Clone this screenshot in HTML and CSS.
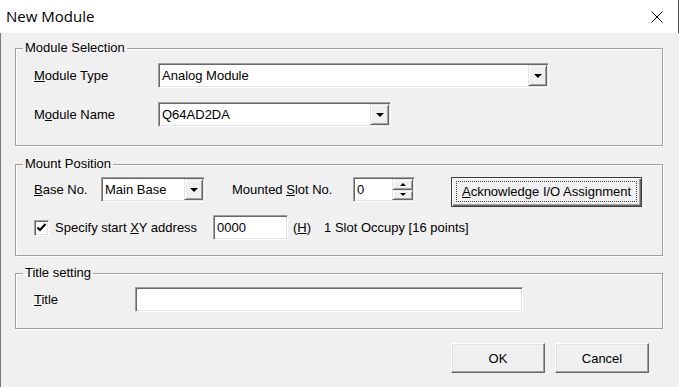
FILE: index.html
```html
<!DOCTYPE html>
<html lang="en">
<head>
  <meta charset="UTF-8">
  <title>New Module</title>
  <link rel="stylesheet" href="styles.css">
</head>
<body>
  <div class="dialog">
    <div class="titlebar">
      <span class="caption">New Module</span>
      <svg class="close" viewBox="0 0 12 12"><path d="M0.5 0.5L11.5 11.5M11.5 0.5L0.5 11.5"/></svg>
    </div>

    <div class="client">
      <fieldset class="group group-module">
        <legend>Module Selection</legend>
        <div class="row">
          <span class="lbl lbl-module"><u>M</u>odule Type</span>
          <div class="combo combo-type">
            <span class="combo-text">Analog Module</span>
            <span class="drop-btn"><i class="arrow"></i></span>
          </div>
        </div>
        <div class="row row-next">
          <span class="lbl lbl-module">M<u>o</u>dule Name</span>
          <div class="combo combo-name">
            <span class="combo-text">Q64AD2DA</span>
            <span class="drop-btn"><i class="arrow"></i></span>
          </div>
        </div>
      </fieldset>

      <fieldset class="group group-mount">
        <legend>Mount Position</legend>
        <div class="row row-top">
          <span class="lbl lbl-base"><u>B</u>ase No.</span>
          <div class="combo combo-base">
            <span class="combo-text">Main Base</span>
            <span class="drop-btn"><i class="arrow"></i></span>
          </div>
          <span class="lbl lbl-slot">Mounted <u>S</u>lot No.</span>
          <div class="spin">
            <span class="combo-text">0</span>
            <span class="spin-btns">
              <span class="spin-btn"><i class="tri tri-up"></i></span>
              <span class="spin-btn"><i class="tri tri-down"></i></span>
            </span>
          </div>
          <div class="btn btn-default"><span class="focus"><u>A</u>cknowledge I/O Assignment</span></div>
        </div>
        <div class="row row-check">
          <span class="check">
            <svg viewBox="0 0 11 11"><path d="M1.5 5.5L4 8L9.5 2"/></svg>
          </span>
          <span class="check-label">Specify start <u>X</u>Y address</span>
          <div class="edit edit-xy"><span class="combo-text">0000</span></div>
          <span class="hex">(<u>H</u>)</span>
          <span class="occupy">1 Slot Occupy [16 points]</span>
        </div>
      </fieldset>

      <fieldset class="group group-title">
        <legend>Title setting</legend>
        <div class="row">
          <span class="lbl lbl-title"><u>T</u>itle</span>
          <div class="edit edit-title"></div>
        </div>
      </fieldset>

      <div class="actions">
        <div class="btn btn-push">OK</div>
        <div class="btn btn-push">Cancel</div>
      </div>
    </div>
  </div>
</body>
</html>
```

FILE: styles.css
```css
html, body {
  margin: 0;
  padding: 0;
  width: 679px;
  height: 387px;
  overflow: hidden;
  background-color: #f0f0f0;
  font-family: 'Liberation Sans', Arial, sans-serif;
  font-size: 13px;
  color: #000;
}

.dialog {
  width: 679px;
  height: 387px;
  display: flex;
  flex-direction: column;
}

/* title bar */
.titlebar {
  height: 33px;
  flex: none;
  background-color: #fff;
  border-right: 1px solid #4a4a4a;
  display: flex;
  align-items: center;
  justify-content: space-between;
  padding: 0 15px 0 6px;
}

.caption {
  font-family: 'Open Sans', 'Noto Sans', sans-serif;
  font-size: 15px;
  color: #000;
  margin-top: -1px;
}

.close {
  width: 12px;
  height: 12px;
  stroke: #000;
  stroke-width: 1;
  fill: none;
}

.client {
  flex: 1;
  border-left: 1px solid #7a7a7a;
  padding: 8px 16px 0 14px;
}

/* group boxes */
.group {
  margin: 0;
  padding: 8px 0 18px 18px;
  border: 1px solid #a0a0a0;
  box-shadow: inset 1px 1px 0 #fff, 1px 1px 0 #fff;
  min-width: 0;
}

.group legend {
  padding: 0 2px;
  margin-left: -11px;
  line-height: 14px;
}

.group-mount {
  margin-top: 11px;
  padding-top: 6px;
  padding-bottom: 15px;
}

.group-title {
  margin-top: 10px;
  padding-top: 7px;
  padding-bottom: 16px;
}

.row {
  display: flex;
  align-items: center;
  height: 25px;
}

.row-next {
  margin-top: 14px;
}

.row-top {
  align-items: flex-start;
  height: 30px;
}

.row-check {
  margin-top: 8px;
}

.lbl {
  line-height: 25px;
  white-space: nowrap;
}

.lbl-module { width: 124px; }
.lbl-base { width: 67px; }
.lbl-slot { width: 121px; margin-left: 27px; }
.lbl-title { width: 101px; }

/* sunken fields */
.combo, .spin, .edit {
  box-sizing: border-box;
  height: 25px;
  display: flex;
  background-color: #fff;
  border-style: solid;
  border-width: 1px;
  border-color: #a0a0a0 #fff #fff #a0a0a0;
  box-shadow: inset 1px 1px 0 #696969, inset -1px -1px 0 #e3e3e3;
  padding: 1px;
}

.combo-type { width: 391px; }
.combo-name { width: 233px; }
.combo-base { width: 104px; }

.combo-text {
  flex: 1;
  padding-left: 2px;
  line-height: 21px;
  white-space: nowrap;
}

.drop-btn, .spin-btn {
  box-sizing: border-box;
  background-color: #f0f0f0;
  border-style: solid;
  border-width: 1px;
  border-color: #e3e3e3 #696969 #696969 #e3e3e3;
  box-shadow: inset 1px 1px 0 #fff, inset -1px -1px 0 #a0a0a0;
  display: flex;
  align-items: center;
  justify-content: center;
}

.drop-btn {
  width: 19px;
}

.arrow {
  width: 0;
  height: 0;
  border-top: 4px solid #000;
  border-left: 4px solid transparent;
  border-right: 4px solid transparent;
  margin-top: 1px;
}

.spin {
  width: 62px;
}

.spin-btns {
  width: 21px;
  display: flex;
  flex-direction: column;
}

.spin-btn {
  flex: 1;
}

.tri {
  width: 0;
  height: 0;
  border-left: 3px solid transparent;
  border-right: 3px solid transparent;
}

.tri-up { border-bottom: 3px solid #000; }
.tri-down { border-top: 3px solid #000; }

.edit-xy { width: 75px; }
.edit-title { width: 388px; }

/* buttons */
.btn {
  box-sizing: border-box;
  height: 30px;
  display: flex;
  align-items: center;
  justify-content: center;
  background-color: #f0f0f0;
  white-space: nowrap;
}

.btn-default {
  width: 191px;
  margin-left: 36px;
  border: 1px solid #3c3c3c;
  box-shadow: inset 1px 1px 0 #fff, inset -1px -1px 0 #696969, inset -2px -2px 0 #a0a0a0;
  padding: 3px 4px 4px 4px;
  align-items: stretch;
}

.focus {
  flex: 1;
  border: 1px dotted #444;
  display: flex;
  align-items: center;
  justify-content: center;
}

.btn-push {
  width: 94px;
  border-style: solid;
  border-width: 1px;
  border-color: #fff #696969 #696969 #fff;
  box-shadow: inset -1px -1px 0 #a0a0a0, inset 1px 1px 0 #e3e3e3;
}

.actions {
  display: flex;
  justify-content: flex-end;
  gap: 10px;
  margin-top: 14px;
  padding-right: 14px;
}

/* checkbox row */
.check {
  box-sizing: border-box;
  width: 15px;
  height: 16px;
  background-color: #fff;
  border-style: solid;
  border-width: 1px;
  border-color: #a0a0a0 #fff #fff #a0a0a0;
  box-shadow: inset 1px 1px 0 #696969, inset -1px -1px 0 #e3e3e3;
  display: flex;
  align-items: center;
  justify-content: center;
  margin-right: 6px;
}

.check svg {
  width: 11px;
  height: 11px;
  fill: none;
  stroke: #000;
  stroke-width: 2;
}

.check-label {
  width: 158px;
  white-space: nowrap;
}

.hex {
  margin-left: 5px;
}

.occupy {
  margin-left: 13px;
  white-space: nowrap;
}
```
